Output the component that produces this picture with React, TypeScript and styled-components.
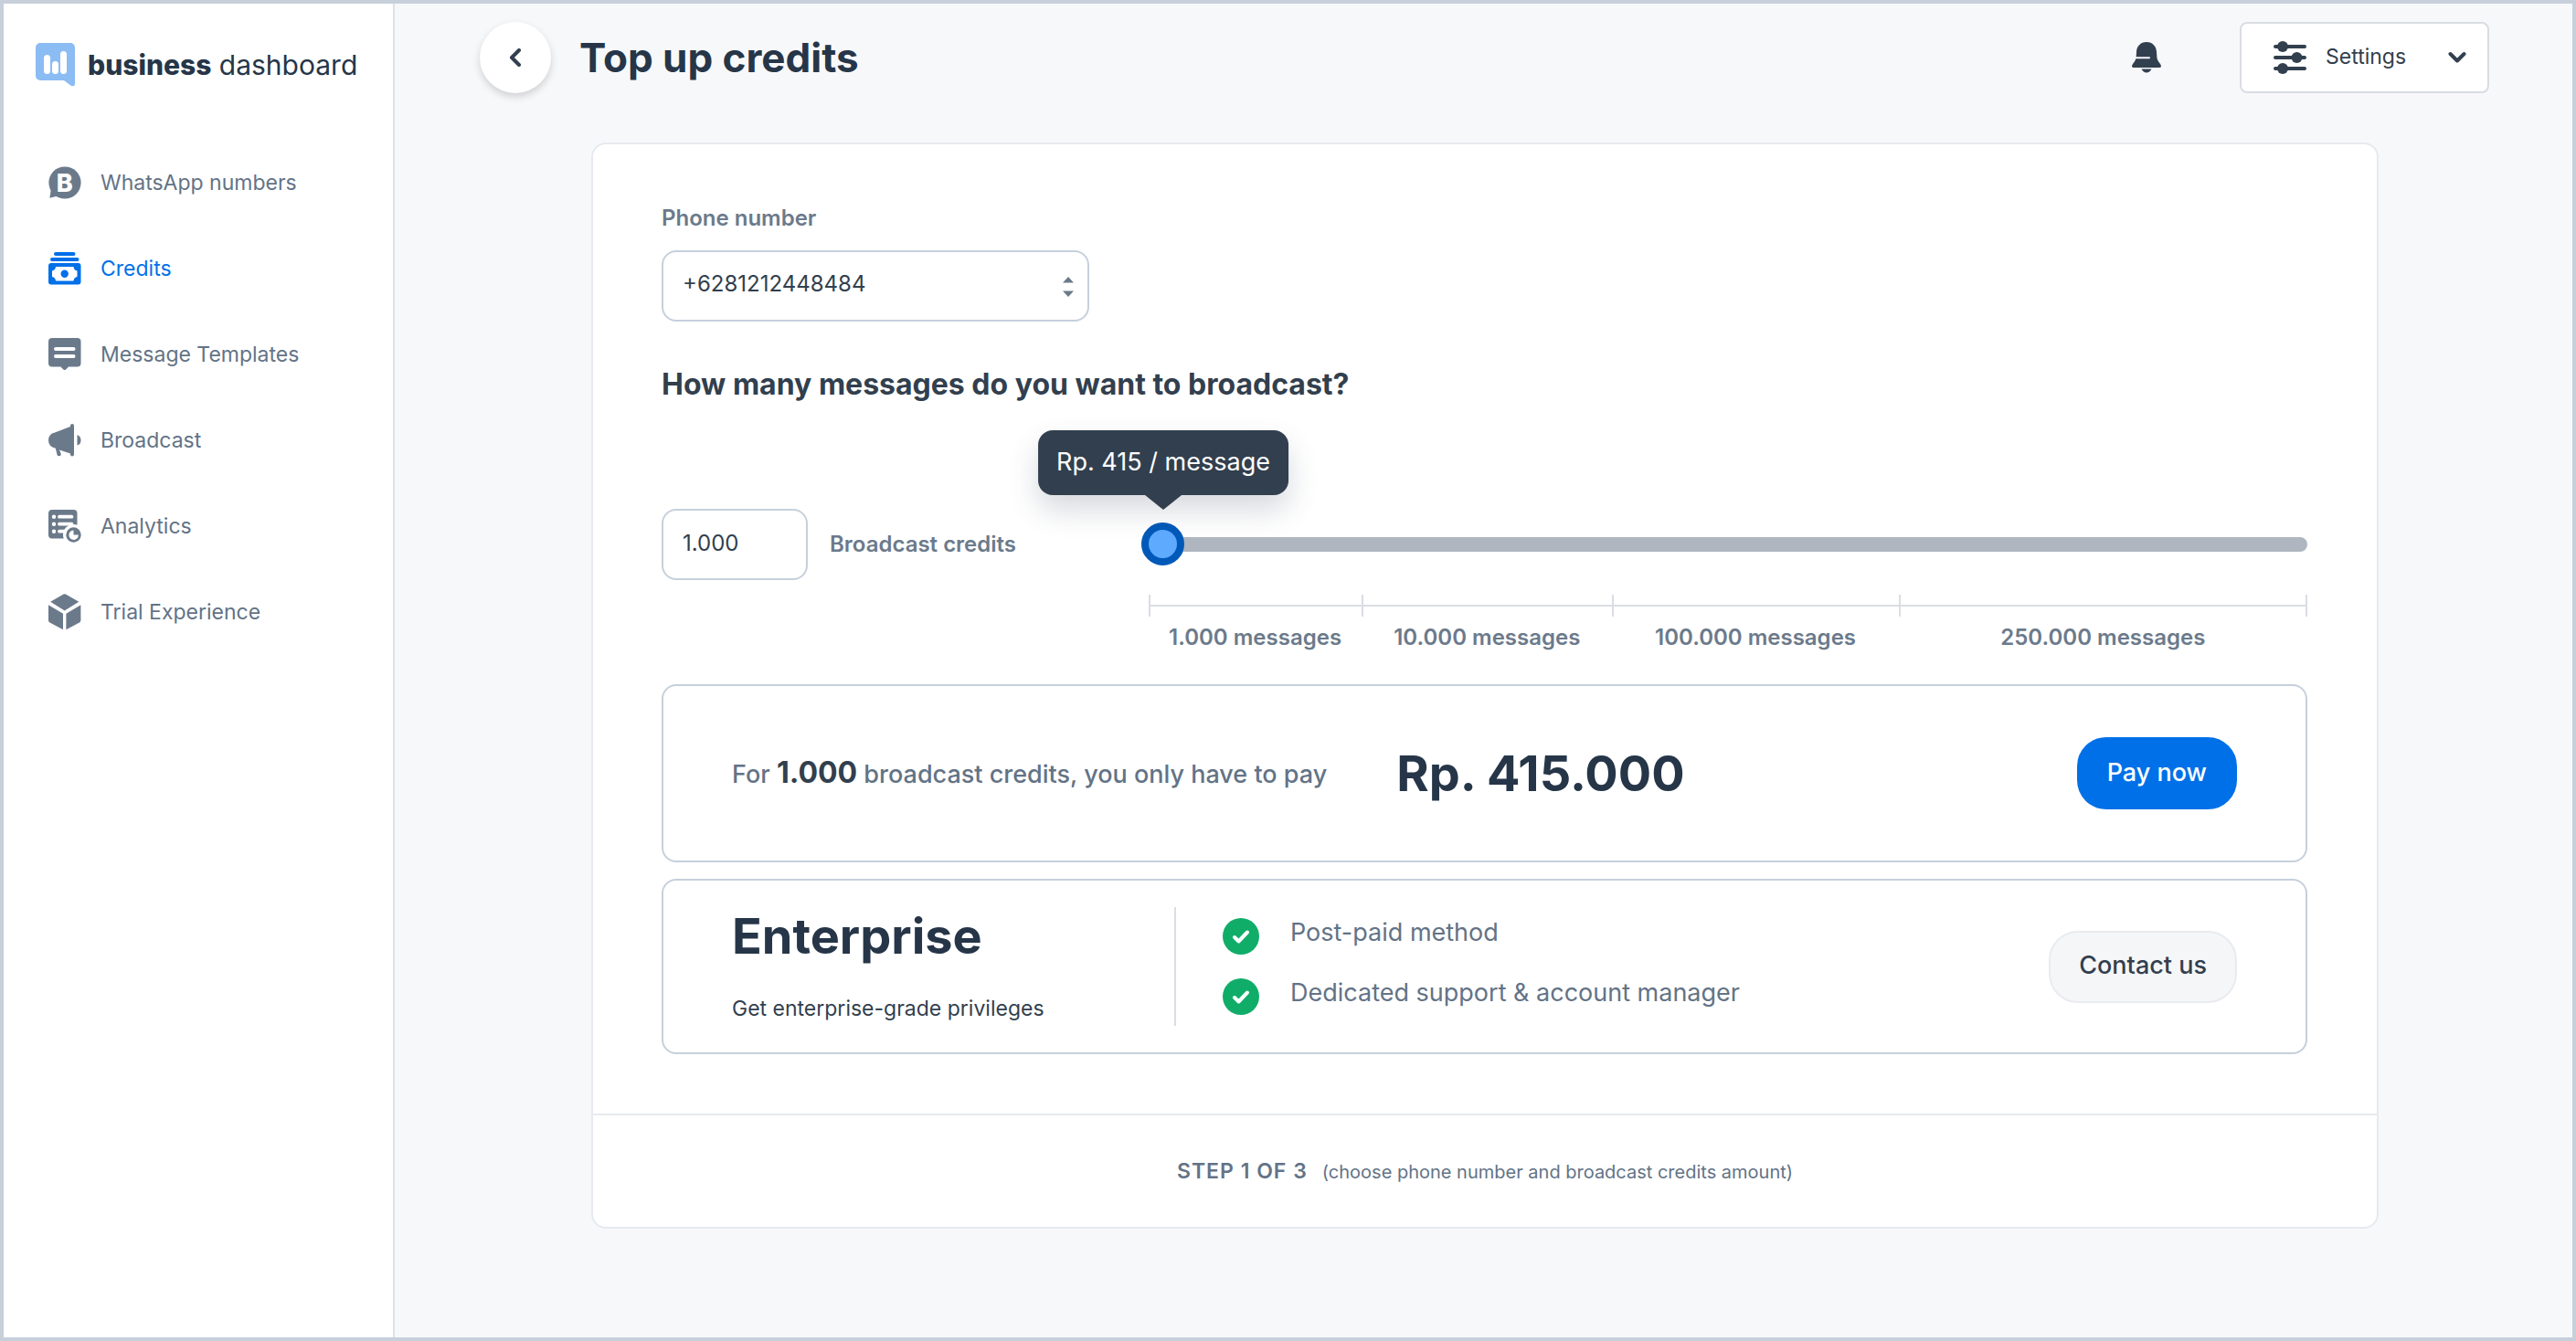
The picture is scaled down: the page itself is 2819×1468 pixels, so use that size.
import React, { useState } from "react";
import styled, { createGlobalStyle, css } from "styled-components";

const color = {
  ink: "#263648",
  text: "#323f4e",
  muted: "#637386",
  icon: "#6b7a8b",
  blue: "#0070e8",
  page: "#f7f8fa",
  frame: "#c7d0da",
  field: "#c6d0dc",
  hairline: "#e6eaef",
  rule: "#dadde3",
};

const GlobalStyle = createGlobalStyle`
  *, *::before, *::after { box-sizing: border-box; }
  body { margin: 0; background: ${color.page}; }
  body, button, input, select {
    font-family: Inter, "Liberation Sans", sans-serif;
    font-size: 23px;
    line-height: 28px;
    color: ${color.text};
  }
  h1, h2, h3, p, ul { margin: 0; padding: 0; }
  svg { display: block; flex: none; }
`;

/* ---------- shell ---------- */

const Shell = styled.div`
  display: flex;
  min-height: 100vh;
  border: 4px solid ${color.frame};
  background: ${color.page};
`;

const Sidebar = styled.aside`
  flex: none;
  width: 428px;
  padding-top: 43px;
  background: #fff;
  border-right: 2px solid #dde1e6;
`;

const Brand = styled.a`
  display: flex;
  align-items: center;
  gap: 14px;
  padding-left: 35px;
  color: ${color.ink};
  font-size: 30px;
  line-height: 48px;
  text-decoration: none;
  white-space: nowrap;
`;

const BrandStrong = styled.strong`
  font-weight: 800;
`;

const Nav = styled.nav`
  display: flex;
  flex-direction: column;
  gap: 54px;
  margin-top: 85px;
  padding-left: 49px;
`;

const NavLink = styled.a<{ $active?: boolean }>`
  display: flex;
  align-items: center;
  gap: 21px;
  height: 40px;
  color: ${(p) => (p.$active ? color.blue : color.muted)};
  text-decoration: none;

  svg { color: ${(p) => (p.$active ? color.blue : color.icon)}; }
`;

const Main = styled.main`
  flex: 1;
  min-width: 0;
  padding-top: 20px;
`;

const Header = styled.header`
  display: flex;
  align-items: center;
  padding: 0 91px 0 93px;
`;

const BackButton = styled.button`
  display: grid;
  place-items: center;
  width: 78px;
  height: 78px;
  padding: 0;
  border: 0;
  border-radius: 50%;
  background: #fff;
  box-shadow: 0 4px 8px rgba(0, 0, 0, 0.16);
`;

const Title = styled.h1`
  flex: 1;
  margin-left: 31px;
  color: ${color.ink};
  font-size: 44px;
  line-height: 56px;
  font-weight: 700;
`;

const BellButton = styled.button`
  margin-right: 86px;
  padding: 0;
  border: 0;
  background: none;
`;

const SettingsButton = styled.button`
  display: flex;
  align-items: center;
  width: 273px;
  height: 78px;
  padding: 0 23px 0 35px;
  border: 2px solid #d9dde2;
  border-radius: 8px;
  background: #fff;
`;

const SettingsLabel = styled.span`
  flex: 1;
  margin-left: 21px;
  padding-bottom: 2px;
  text-align: left;
`;

/* ---------- card ---------- */

const Card = styled.section`
  margin: 54px 212px 0 215px;
  border: 2px solid ${color.hairline};
  border-radius: 16px;
  background: #fff;
`;

const CardBody = styled.div`
  padding: 67px 76px 65px 75px;
`;

const FieldLabel = styled.label`
  color: ${color.icon};
  font-size: 24px;
  font-weight: 600;
`;

const SelectBox = styled.div`
  position: relative;
  width: 468px;
  margin-top: 21px;

  svg {
    position: absolute;
    right: 17px;
    top: 29px;
    color: ${color.icon};
    pointer-events: none;
  }
`;

const control = css`
  height: 78px;
  border: 2px solid ${color.field};
  border-radius: 16px;
  background: #fff;
  font-size: 24px;
`;

const Select = styled.select`
  ${control}
  display: block;
  width: 100%;
  padding: 0 48px 4px 21px;
  appearance: none;
`;

const Question = styled.h2`
  margin-top: 51px;
  font-size: 32px;
  line-height: 36px;
  font-weight: 700;
`;

const Picker = styled.div`
  display: grid;
  grid-template-columns: 525px 1fr;
  row-gap: 16px;
  margin-top: 118px;
`;

const Amount = styled.div`
  display: flex;
  align-items: center;
  gap: 24px;
`;

const AmountInput = styled.input`
  ${control}
  width: 160px;
  padding: 0 21px 4px;
`;

const SliderBox = styled.div`
  position: relative;
  display: flex;
  align-items: center;
`;

const Slider = styled.input`
  width: 100%;
  height: 47px;
  margin: 0;
  background: none;
  appearance: none;

  &::-webkit-slider-runnable-track {
    height: 16px;
    border-radius: 8px;
    background: #afb6bf;
  }

  &::-webkit-slider-thumb {
    appearance: none;
    width: 47px;
    height: 47px;
    margin-top: -16px;
    border: 8px solid #0059b8;
    border-radius: 50%;
    background: #5eaaff;
  }
`;

const Tooltip = styled.output`
  position: absolute;
  left: 24px;
  bottom: 93px;
  padding: 19px 20px 20px;
  border-radius: 16px;
  background: ${color.text};
  box-shadow: 0 16px 32px rgba(50, 63, 90, 0.2);
  color: #fff;
  font-size: 27px;
  line-height: 32px;
  white-space: nowrap;
  transform: translateX(-50%);

  &::after {
    content: "";
    position: absolute;
    left: 50%;
    top: 100%;
    margin-left: -20px;
    border: 20px solid transparent;
    border-top: 16px solid ${color.text};
    border-bottom: 0;
  }
`;

const Scale = styled.div`
  grid-column: 2;
  display: grid;
  grid-template-columns: 233fr 274fr 313fr 447fr;
  margin-left: 8px;
`;

const Segment = styled.div`
  color: ${color.icon};
  font-size: 24px;
  font-weight: 600;
  text-align: center;
  white-space: nowrap;
`;

const Ruler = styled.div<{ $last: boolean }>`
  display: flex;
  align-items: center;
  height: 24px;
  margin-bottom: 9px;
  border-left: 2px solid ${color.rule};
  border-right: ${(p) => (p.$last ? `2px solid ${color.rule}` : "0")};

  &::before {
    content: "";
    flex: 1;
    height: 2px;
    background: ${color.rule};
  }
`;

const Panel = styled.div`
  display: flex;
  align-items: center;
  padding: 0 75px;
  border: 2px solid ${color.field};
  border-radius: 16px;
`;

const PayPanel = styled(Panel)`
  margin-top: 37px;
  padding-block: 56px;
`;

const EnterprisePanel = styled(Panel)`
  margin-top: 18px;
  padding-block: 29px;
`;

const PayText = styled.p`
  color: ${color.muted};
  font-size: 27px;
  line-height: 36px;
  font-weight: 500;
`;

const PayCount = styled.strong`
  color: ${color.text};
  font-size: 32px;
  font-weight: 700;
`;

const Price = styled.p`
  margin-left: 76px;
  color: ${color.ink};
  font-size: 54px;
  line-height: 64px;
  font-weight: 700;
`;

const PillButton = styled.button<{ $primary?: boolean }>`
  height: 79px;
  margin-left: auto;
  padding: 0 31px 2px;
  border: 2px solid ${(p) => (p.$primary ? color.blue : "#e9ebef")};
  border-radius: 32px;
  background: ${(p) => (p.$primary ? color.blue : "#f5f6f8")};
  color: ${(p) => (p.$primary ? "#fff" : color.text)};
  font-size: 27px;
  line-height: 32px;
  font-weight: 500;
`;

const Plan = styled.div`
  display: flex;
  flex-direction: column;
  gap: 33px;
  width: 486px;
  height: 130px;
  border-right: 2px solid ${color.rule};
`;

const PlanName = styled.h3`
  color: ${color.ink};
  font-size: 54px;
  line-height: 64px;
  font-weight: 700;
`;

const Perks = styled.ul`
  display: flex;
  flex-direction: column;
  gap: 26px;
  margin-left: 51px;
  list-style: none;
`;

const Perk = styled.li`
  display: flex;
  gap: 34px;
  color: ${color.muted};
  font-size: 27px;
  line-height: 32px;
`;

const CardFooter = styled.footer`
  display: flex;
  align-items: baseline;
  justify-content: center;
  gap: 16px;
  padding: 47px 0 46px;
  border-top: 2px solid ${color.hairline};
  color: ${color.muted};
`;

const Step = styled.span`
  font-weight: 600;
  letter-spacing: 1px;
`;

const StepHint = styled.span`
  font-size: 20px;
`;

/* ---------- drawings ---------- */

const Logo = () => (
  <svg width="43" height="48" viewBox="0 0 43 48" aria-hidden="true">
    <path d="M5 0h33a5 5 0 0 1 5 5v40q0 3-4 2l-8-6H5a5 5 0 0 1-5-5V5a5 5 0 0 1 5-5z" fill="#8bbcf3" />
    <g fill="#fff">
      <rect x="9" y="13" width="7" height="21" rx="3.5" />
      <rect x="18" y="20" width="7" height="14" rx="3.5" />
      <rect x="27" y="9" width="7" height="25" rx="3.5" />
    </g>
  </svg>
);

const NumbersIcon = () => (
  <svg width="36" height="36" viewBox="0 0 36 36" aria-hidden="true">
    <circle cx="18" cy="18" r="17.6" fill="currentColor" />
    <path d="M3 24 1.4 34.8 12 32z" fill="currentColor" />
    <text x="17.8" y="27.6" textAnchor="middle" fontSize="27" fontWeight="800" fill="#fff">B</text>
  </svg>
);

const CreditsIcon = () => (
  <svg width="36" height="36" viewBox="0 0 36 36" fill="currentColor" aria-hidden="true">
    <rect x="6" y="0" width="23.5" height="4" rx="2" />
    <rect x="2" y="6" width="31.5" height="4" rx="2" />
    <path
      fillRule="evenodd"
      d="M3 12h29.5a3 3 0 0 1 3 3v17.5a3 3 0 0 1-3 3H3a3 3 0 0 1-3-3V15a3 3 0 0 1 3-3zM8 16q-.3 3.800-4 4.500v6.500q3.700.700 4 4.500h19.500q.300-3.800 4-4.500v-6.500q-3.700-.700-4-4.500z"
    />
    <circle cx="17.7" cy="23.7" r="4.2" />
  </svg>
);

const TemplatesIcon = () => (
  <svg width="36" height="36" viewBox="0 0 36 36" aria-hidden="true">
    <path d="M4 0h27.5a4 4 0 0 1 4 4v23.5a4 4 0 0 1-4 4H22l-3 3q-1.3 1-2.6 0l-3-3H4a4 4 0 0 1-4-4V4a4 4 0 0 1 4-4z" fill="currentColor" />
    <path d="M8 12h19.5M8 20h19.5" stroke="#fff" strokeWidth="4" strokeLinecap="round" />
  </svg>
);

const BroadcastIcon = () => (
  <svg width="36" height="36" viewBox="0 0 36 36" fill="currentColor" aria-hidden="true">
    <path d="M26 0a2 2 0 0 1 2 2v31.5a2 2 0 0 1-4 0V32.500L12 28.500l1.800 4.500q.2 2.200-2 2.300-1.900 0-2.300-1.500L7.800 26.700Q0 25 0 18T7 9.500L24 3V2a2 2 0 0 1 2-2z" />
    <path d="M31.500 12q4 1.500 4 6t-4 5.500z" />
  </svg>
);

const AnalyticsIcon = () => (
  <svg width="36" height="36" viewBox="0 0 36 36" aria-hidden="true">
    <rect width="31.5" height="31.5" rx="4" fill="currentColor" />
    <g stroke="#fff" strokeWidth="3.8" strokeLinecap="round">
      <path d="M12 7.7h13.500M12 15.700h13.500M12 23.700h9" />
      <path d="M6 7.7h.01M6 15.700h.01M6 23.700h.01" strokeWidth="4.4" />
    </g>
    <circle cx="27.5" cy="27.5" r="11.5" fill="#fff" />
    <circle cx="27.5" cy="27.5" r="8.2" fill="currentColor" />
    <path d="M27.500 22.500v5h5.300a5.200 5.200 0 1 1-5.300-5z" fill="#fff" />
  </svg>
);

const TrialIcon = () => (
  <svg width="36" height="40" viewBox="0 0 36 40" fill="currentColor" aria-hidden="true">
    <path d="M16.500.600q1.200-.700 2.400 0L33.300 8.700 17.700 18.500 2.200 8.700z" />
    <path d="M0 12.300 16 21.800V39.300L1.500 31.500Q0 30.500 0 29z" />
    <path d="M35.400 12.300 19.400 21.800V39.300l14.500-7.800q1.500-1 1.500-2.500z" />
  </svg>
);

const BackIcon = () => (
  <svg width="20" height="20" viewBox="0 0 20 20" fill="none" stroke={color.text} strokeWidth="4" strokeLinecap="round" strokeLinejoin="round" aria-hidden="true">
    <path d="M14 2 6 10l8 8" />
  </svg>
);

const DownIcon = () => (
  <svg width="20" height="14" viewBox="0 0 20 14" fill="none" stroke={color.text} strokeWidth="4" strokeLinecap="round" strokeLinejoin="round" aria-hidden="true">
    <path d="M2.500 3 10 10.500 17.500 3" />
  </svg>
);

const BellIcon = () => (
  <svg width="32" height="34" viewBox="0 0 32 34" fill={color.text} aria-hidden="true">
    <path d="M16 0C9.500 0 5.200 4.700 5 11L4.500 18Q3.800 20.500 1 24-.3 26 .2 27.300.600 28 2 28H30q1.400 0 1.800-.7.500-1.300-.8-3.300-2.800-3.500-3.500-6L27 11C26.800 4.700 22.500 0 16 0z" />
    <path d="M10.500 29.500h11Q19.500 33.500 16 33.500t-5.500-4z" />
    <path d="M4 17.300H19" stroke={color.page} strokeWidth="2" strokeLinecap="round" />
  </svg>
);

const SlidersIcon = () => (
  <svg width="36" height="36" viewBox="0 0 36 36" fill={color.text} aria-hidden="true">
    <path d="M2 6h32M2 18h32M2 30h32" stroke={color.text} strokeWidth="4" strokeLinecap="round" />
    <circle cx="10" cy="6" r="6" />
    <circle cx="25.5" cy="18" r="6" />
    <circle cx="10" cy="30" r="6" />
  </svg>
);

const StepperIcon = () => (
  <svg width="12" height="22" viewBox="0 0 12 22" fill="currentColor" aria-hidden="true">
    <path d="M6 0 12 6.500H0zM6 22 0 15.500h12z" />
  </svg>
);

const CheckIcon = () => (
  <svg width="40" height="40" viewBox="0 0 40 40" aria-hidden="true">
    <circle cx="20" cy="20" r="20" fill="#10ad69" />
    <path d="m13 21 4.500 4.500L27 15.500" fill="none" stroke="#fff" strokeWidth="4" strokeLinecap="round" strokeLinejoin="round" />
  </svg>
);

/* ---------- content ---------- */

const links = [
  { label: "WhatsApp numbers", Icon: NumbersIcon },
  { label: "Credits", Icon: CreditsIcon, active: true },
  { label: "Message Templates", Icon: TemplatesIcon },
  { label: "Broadcast", Icon: BroadcastIcon },
  { label: "Analytics", Icon: AnalyticsIcon },
  { label: "Trial Experience", Icon: TrialIcon },
];

const steps = ["1.000", "10.000", "100.000", "250.000"];
const perks = ["Post-paid method", "Dedicated support & account manager"];

export default function App() {
  const [amount, setAmount] = useState("1.000");

  return (
    <>
      <GlobalStyle />
      <Shell>
        <Sidebar>
          <Brand href="#">
            <Logo />
            <span>
              <BrandStrong>business</BrandStrong> dashboard
            </span>
          </Brand>
          <Nav>
            {links.map(({ label, Icon, active }) => (
              <NavLink key={label} href="#" $active={active} aria-current={active ? "page" : undefined}>
                <Icon />
                {label}
              </NavLink>
            ))}
          </Nav>
        </Sidebar>

        <Main>
          <Header>
            <BackButton type="button" aria-label="Back">
              <BackIcon />
            </BackButton>
            <Title>Top up credits</Title>
            <BellButton type="button" aria-label="Notifications">
              <BellIcon />
            </BellButton>
            <SettingsButton type="button">
              <SlidersIcon />
              <SettingsLabel>Settings</SettingsLabel>
              <DownIcon />
            </SettingsButton>
          </Header>

          <Card>
            <CardBody>
              <FieldLabel htmlFor="phone">Phone number</FieldLabel>
              <SelectBox>
                <Select id="phone">
                  <option>+6281212448484</option>
                </Select>
                <StepperIcon />
              </SelectBox>

              <Question>How many messages do you want to broadcast?</Question>

              <Picker>
                <Amount>
                  <AmountInput id="amount" value={amount} onChange={(e) => setAmount(e.target.value)} />
                  <FieldLabel htmlFor="amount">Broadcast credits</FieldLabel>
                </Amount>
                <SliderBox>
                  <Slider type="range" min={0} max={100} defaultValue={0} aria-label="Number of messages" />
                  <Tooltip>Rp. 415 / message</Tooltip>
                </SliderBox>
                <Scale>
                  {steps.map((step, i) => (
                    <Segment key={step}>
                      <Ruler $last={i === steps.length - 1} />
                      {step} messages
                    </Segment>
                  ))}
                </Scale>
              </Picker>

              <PayPanel>
                <PayText>
                  For <PayCount>1.000</PayCount> broadcast credits, you only have to pay
                </PayText>
                <Price>Rp. 415.000</Price>
                <PillButton type="button" $primary>
                  Pay now
                </PillButton>
              </PayPanel>

              <EnterprisePanel>
                <Plan>
                  <PlanName>Enterprise</PlanName>
                  <p>Get enterprise-grade privileges</p>
                </Plan>
                <Perks>
                  {perks.map((perk) => (
                    <Perk key={perk}>
                      <CheckIcon />
                      {perk}
                    </Perk>
                  ))}
                </Perks>
                <PillButton type="button">Contact us</PillButton>
              </EnterprisePanel>
            </CardBody>

            <CardFooter>
              <Step>STEP 1 OF 3</Step>
              <StepHint>(choose phone number and broadcast credits amount)</StepHint>
            </CardFooter>
          </Card>
        </Main>
      </Shell>
    </>
  );
}
